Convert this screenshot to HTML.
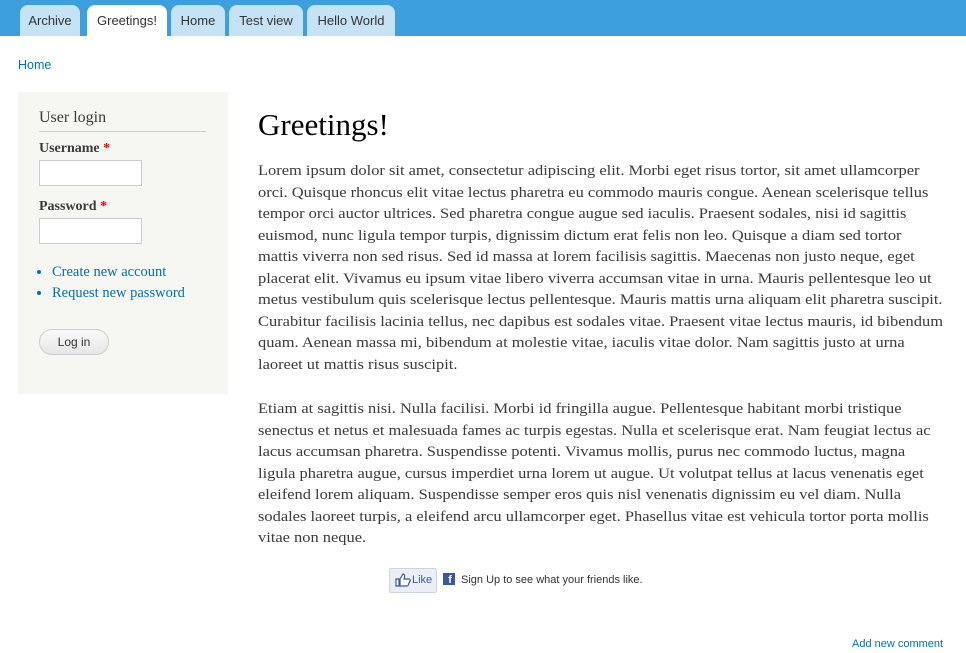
<!DOCTYPE html>
<html><head><meta charset="utf-8"><style>
body{margin:0;width:966px;height:653px;background:#fff;font-family:"Liberation Sans",sans-serif;position:relative;overflow:hidden}
.hdr{position:absolute;left:0;top:0;width:966px;height:36px;background:#3d9fdd}
.tab{position:absolute;top:5px;height:31px;background:#c6e2f5;border-radius:8px 8px 0 0;font-size:13px;color:#333;line-height:31px;text-align:center}
.tab.on{background:#fff}
.crumb{position:absolute;left:18px;top:58px;font-size:12.5px;color:#0071b3}
.side{position:absolute;left:18px;top:92px;width:210px;height:302px;background:#f6f6f2}
.serif{font-family:"Liberation Serif",serif}
h2{position:absolute;left:21px;top:17px;margin:0;font-weight:normal;font-size:16px;color:#3b3b3b;width:167px;border-bottom:1px solid #ccc;padding-bottom:4px}
.lbl{position:absolute;left:21px;font-weight:bold;font-size:14px;color:#3b3b3b}
.lbl span{color:#e00}
.inp{position:absolute;left:21px;width:101px;height:24px;border:1px solid #ccc;background:#fff}
ul{position:absolute;left:16px;top:170px;margin:0;padding-left:18px;font-size:14.5px;color:#0071b3;line-height:21px}
.btn{position:absolute;left:21px;top:237px;width:68px;height:24px;border:1px solid #ccc;border-radius:13px;background:linear-gradient(#fafafa,#e6e6e6);font-size:12px;text-align:center;line-height:24px;color:#333}
h1{position:absolute;left:258px;top:107px;margin:0;font-weight:normal;font-size:31px;color:#000}
.txt{position:absolute;left:258px;font-size:15.2px;line-height:21.5px;color:#3b3b3b;white-space:nowrap;transform:scaleX(1.082);transform-origin:0 0}
.like{position:absolute;left:389px;top:568px;width:46px;height:23px;border:1px solid #cad4e7;background:#eceef5;border-radius:2px;font-size:11px;color:#3b5998;line-height:23px}
.fb{position:absolute;left:443px;top:573px;width:12px;height:12px;background:#3b5998;color:#fff;font-size:11px;font-weight:bold;text-align:right;line-height:14px;overflow:hidden}
.su{position:absolute;left:461px;top:574px;font-size:11px;color:#333}
.add{position:absolute;left:852px;top:638px;font-size:11px;color:#0071b3}
</style></head><body>
<div class="hdr"></div>
<div class="tab" style="left:20px;width:60px">Archive</div>
<div class="tab on" style="left:87px;width:80px">Greetings!</div>
<div class="tab" style="left:171px;width:54px">Home</div>
<div class="tab" style="left:229px;width:74px">Test view</div>
<div class="tab" style="left:307px;width:88px">Hello World</div>
<div class="crumb">Home</div>
<div class="side serif">
<h2>User login</h2>
<div class="lbl" style="top:49px">Username <span>*</span></div>
<div class="inp" style="top:68px"></div>
<div class="lbl" style="top:107px">Password <span>*</span></div>
<div class="inp" style="top:126px"></div>
<ul><li>Create new account</li><li>Request new password</li></ul>
<div class="btn" style="font-family:'Liberation Sans',sans-serif">Log in</div>
</div>
<h1 class="serif">Greetings!</h1>
<div class="txt serif" style="top:160px">Lorem ipsum dolor sit amet, consectetur adipiscing elit. Morbi eget risus tortor, sit amet ullamcorper<br>orci. Quisque rhoncus elit vitae lectus pharetra eu commodo mauris congue. Aenean scelerisque tellus<br>tempor orci auctor ultrices. Sed pharetra congue augue sed iaculis. Praesent sodales, nisi id sagittis<br>euismod, nunc ligula tempor turpis, dignissim dictum erat felis non leo. Quisque a diam sed tortor<br>mattis viverra non sed risus. Sed id massa at lorem facilisis sagittis. Maecenas non justo neque, eget<br>placerat elit. Vivamus eu ipsum vitae libero viverra accumsan vitae in urna. Mauris pellentesque leo ut<br>metus vestibulum quis scelerisque lectus pellentesque. Mauris mattis urna aliquam elit pharetra suscipit.<br>Curabitur facilisis lacinia tellus, nec dapibus est sodales vitae. Praesent vitae lectus mauris, id bibendum<br>quam. Aenean massa mi, bibendum at molestie vitae, iaculis vitae dolor. Nam sagittis justo at urna<br>laoreet ut mattis risus suscipit.</div>
<div class="txt serif" style="top:398px">Etiam at sagittis nisi. Nulla facilisi. Morbi id fringilla augue. Pellentesque habitant morbi tristique<br>senectus et netus et malesuada fames ac turpis egestas. Nulla et scelerisque erat. Nam feugiat lectus ac<br>lacus accumsan pharetra. Suspendisse potenti. Vivamus mollis, purus nec commodo luctus, magna<br>ligula pharetra augue, cursus imperdiet urna lorem ut augue. Ut volutpat tellus at lacus venenatis eget<br>eleifend lorem aliquam. Suspendisse semper eros quis nisl venenatis dignissim eu vel diam. Nulla<br>sodales laoreet turpis, a eleifend arcu ullamcorper eget. Phasellus vitae est vehicula tortor porta mollis<br>vitae non neque.</div>
<div class="like"><svg width="16" height="14" viewBox="0 0 16 14" style="position:absolute;left:5px;top:4px"><path d="M1 6h3v7H1zM5 6l3-5c1 0 2 1 1.5 3L9 6h5c1 0 1.5 1 1 2l-2 4.5c-.3.5-1 .5-1.5.5H5z" fill="#fff" stroke="#3b5998" stroke-width="1.2"/></svg><span style="position:absolute;left:22px">Like</span></div>
<div class="fb">f&nbsp;</div>
<div class="su">Sign Up to see what your friends like.</div>
<div class="add">Add new comment</div>
</body></html>
